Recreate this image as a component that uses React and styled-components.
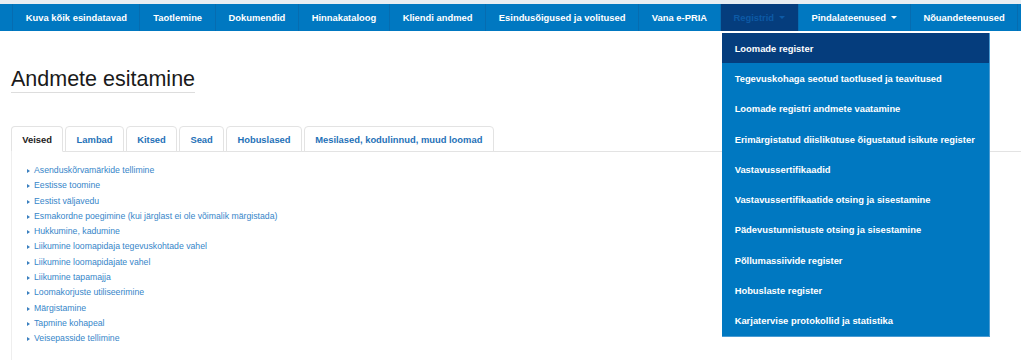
import React from "react";
import styled, { createGlobalStyle } from "styled-components";

const GlobalStyle = createGlobalStyle`
    html, body {
        margin: 0;
        padding: 0;
        background: #fff;
    }
    body {
        font-family: "Liberation Sans", Arial, sans-serif;
    }
    * {
        box-sizing: border-box;
    }
`;

const navItems = [
    { label: "Kuva kõik esindatavad" },
    { label: "Taotlemine" },
    { label: "Dokumendid" },
    { label: "Hinnakataloog" },
    { label: "Kliendi andmed" },
    { label: "Esindusõigused ja volitused" },
    { label: "Vana e-PRIA" },
    { label: "Registrid", caret: true, open: true },
    { label: "Pindalateenused", caret: true },
    { label: "Nõuandeteenused" },
];

const registers = [
    "Loomade register",
    "Tegevuskohaga seotud taotlused ja teavitused",
    "Loomade registri andmete vaatamine",
    "Erimärgistatud diislikütuse õigustatud isikute register",
    "Vastavussertifikaadid",
    "Vastavussertifikaatide otsing ja sisestamine",
    "Pädevustunnistuste otsing ja sisestamine",
    "Põllumassiivide register",
    "Hobuslaste register",
    "Karjatervise protokollid ja statistika",
];

const tabs = [
    "Veised",
    "Lambad",
    "Kitsed",
    "Sead",
    "Hobuslased",
    "Mesilased, kodulinnud, muud loomad",
];

const links = [
    "Asenduskõrvamärkide tellimine",
    "Eestisse toomine",
    "Eestist väljavedu",
    "Esmakordne poegimine (kui järglast ei ole võimalik märgistada)",
    "Hukkumine, kadumine",
    "Liikumine loomapidaja tegevuskohtade vahel",
    "Liikumine loomapidajate vahel",
    "Liikumine tapamajja",
    "Loomakorjuste utiliseerimine",
    "Märgistamine",
    "Tapmine kohapeal",
    "Veisepasside tellimine",
];

export default function App() {
    return (
        <>
            <GlobalStyle />
            <TopBand />
            <Navbar>
                {navItems.map((item) => (
                    <NavItem key={item.label} $open={item.open}>
                        {item.label}
                        {item.caret && <Caret />}
                        {item.open && (
                            <Dropdown>
                                {registers.map((r, i) => (
                                    <DropItem key={r} $active={i === 0}>
                                        {r}
                                    </DropItem>
                                ))}
                            </Dropdown>
                        )}
                    </NavItem>
                ))}
            </Navbar>
            <Main>
                <Title>Andmete esitamine</Title>
                <Tabs>
                    {tabs.map((t, i) => (
                        <Tab key={t} $active={i === 0}>
                            {t}
                        </Tab>
                    ))}
                </Tabs>
                <Panel>
                    <LinkList>
                        {links.map((l) => (
                            <LinkItem key={l}>{l}</LinkItem>
                        ))}
                    </LinkList>
                </Panel>
            </Main>
        </>
    );
}

const TopBand = styled.div`
    height: 4px;
    background: #e8edf2;
`;

const Navbar = styled.ul`
    display: flex;
    margin: 0;
    padding: 0 0 0 12px;
    list-style: none;
    height: 27px;
    background: #0078c1;
    position: relative;
    z-index: 5;
`;

const NavItem = styled.li`
    position: relative;
    display: flex;
    align-items: center;
    padding: 0 12.6px 0 12.8px;
    font-size: 9.4px;
    font-weight: bold;
    color: ${(p) => (p.$open ? "#0d5aa6" : "#fff")};
    background: ${(p) => (p.$open ? "#053d7d" : "transparent")};
    border-right: 1px solid #066cb0;
    white-space: nowrap;

    &:first-child {
        border-left: 1px solid #066cb0;
    }
`;

const Caret = styled.span`
    display: inline-block;
    margin-left: 5px;
    width: 0;
    height: 0;
    border-left: 3px solid transparent;
    border-right: 3px solid transparent;
    border-top: 3px solid currentColor;
`;

const Dropdown = styled.ul`
    position: absolute;
    top: 29px;
    left: 1px;
    width: 268px;
    margin: 0;
    padding: 0;
    list-style: none;
    background: #0078c1;
    border-right: 1px solid #4a9bd2;
    border-bottom: 1px solid #4a9bd2;
`;

const DropItem = styled.li`
    height: 30.3px;
    display: flex;
    align-items: center;
    padding: 0 13px;
    font-size: 9.4px;
    font-weight: bold;
    color: #fff;
    background: ${(p) => (p.$active ? "#053d7d" : "transparent")};
`;

const Main = styled.main`
    padding: 0 0 0 11px;
`;

const Title = styled.h1`
    display: inline-block;
    margin: 36px 0 33px;
    padding-bottom: 1px;
    font-size: 21.5px;
    line-height: 24px;
    font-weight: normal;
    color: #1a1a1a;
    border-bottom: 1px solid #ddd;
`;

const Tabs = styled.ul`
    display: flex;
    margin: 0;
    padding: 0;
    list-style: none;
    border-bottom: 1px solid #e3e3e3;
`;

const Tab = styled.li`
    height: 26px;
    display: flex;
    align-items: center;
    margin: 0 2px -1px 0;
    padding: 0 10.3px;
    font-size: 9.4px;
    font-weight: bold;
    color: ${(p) => (p.$active ? "#222" : "#1f72b8")};
    background: #fff;
    border: 1px solid #e3e3e3;
    border-bottom-color: ${(p) => (p.$active ? "#fff" : "#e3e3e3")};
    border-radius: 4px 4px 0 0;
`;

const Panel = styled.div`
    border-left: 1px solid #eee;
    padding: 11px 0 20px 15px;
    min-height: 210px;
`;

const LinkList = styled.ul`
    margin: 0;
    padding: 0;
    list-style: none;
`;

const LinkItem = styled.li`
    position: relative;
    padding-left: 7px;
    font-size: 8.7px;
    line-height: 15.3px;
    color: #3686c9;

    &::before {
        content: "";
        position: absolute;
        left: 0;
        top: 6px;
        border-top: 2px solid transparent;
        border-bottom: 2px solid transparent;
        border-left: 3px solid #3a7fbf;
    }
`;
